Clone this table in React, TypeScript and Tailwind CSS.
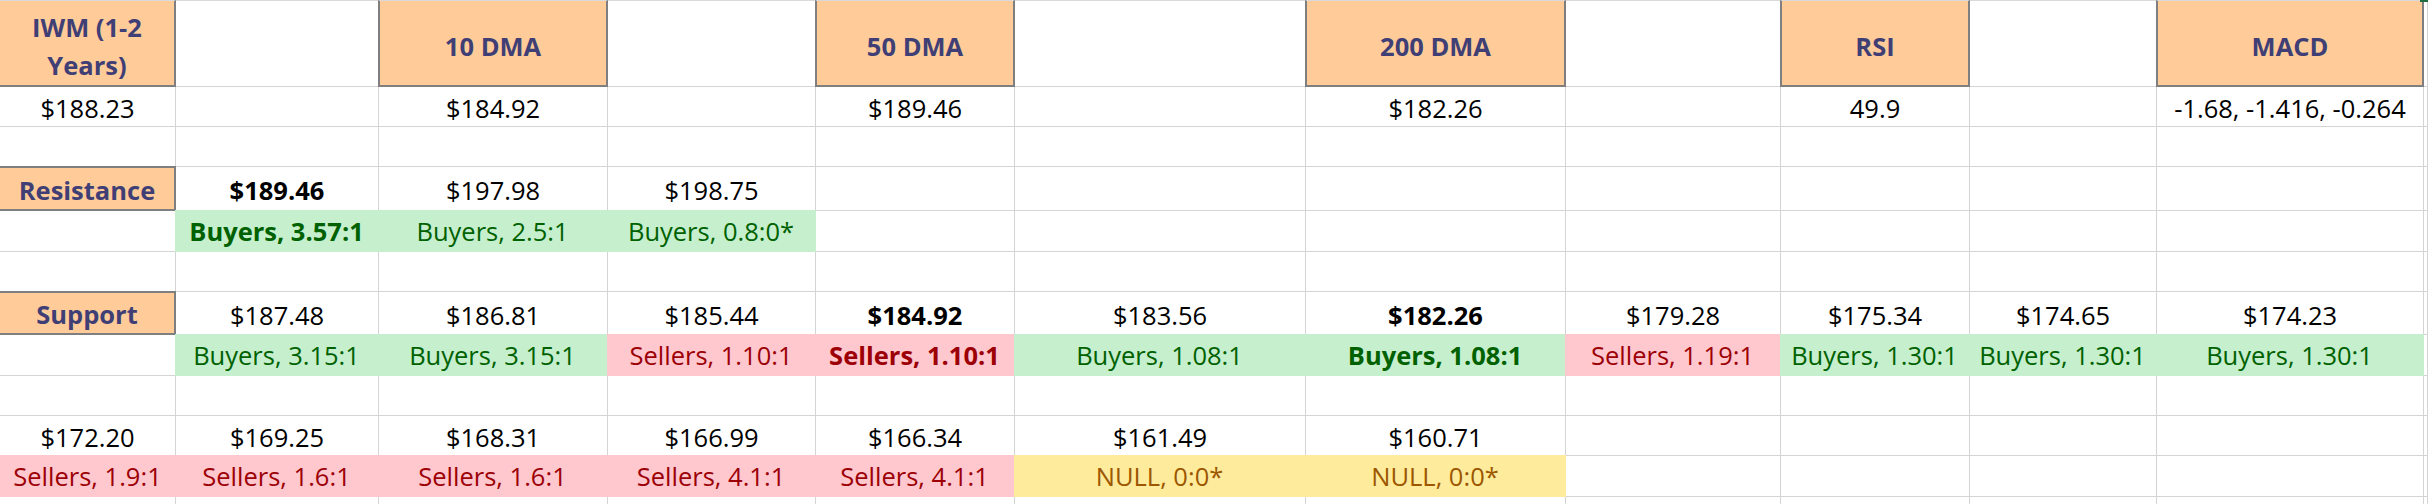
import React from "react";

type Kind =
  | "empty"
  | "plain"
  | "bold"
  | "head"
  | "headSide"
  | "green"
  | "greenB"
  | "red"
  | "redB"
  | "yellow";

type C = [Kind, string?];

const FONT = { fontFamily: '"Open Sans", "Liberation Sans", sans-serif' };

const E: C = ["empty"];

const rows: C[][] = [
  [
    ["head", "IWM (1-2|Years)"],
    E,
    ["head", "10 DMA"],
    E,
    ["head", "50 DMA"],
    E,
    ["head", "200 DMA"],
    E,
    ["head", "RSI"],
    E,
    ["head", "MACD"],
    E,
  ],
  [
    ["plain", "$188.23"],
    E,
    ["plain", "$184.92"],
    E,
    ["plain", "$189.46"],
    E,
    ["plain", "$182.26"],
    E,
    ["plain", "49.9"],
    E,
    ["plain", "-1.68, -1.416, -0.264"],
    E,
  ],
  [E, E, E, E, E, E, E, E, E, E, E, E],
  [
    ["headSide", "Resistance"],
    ["bold", "$189.46"],
    ["plain", "$197.98"],
    ["plain", "$198.75"],
    E, E, E, E, E, E, E, E,
  ],
  [
    E,
    ["greenB", "Buyers, 3.57:1"],
    ["green", "Buyers, 2.5:1"],
    ["green", "Buyers, 0.8:0*"],
    E, E, E, E, E, E, E, E,
  ],
  [E, E, E, E, E, E, E, E, E, E, E, E],
  [
    ["headSide", "Support"],
    ["plain", "$187.48"],
    ["plain", "$186.81"],
    ["plain", "$185.44"],
    ["bold", "$184.92"],
    ["plain", "$183.56"],
    ["bold", "$182.26"],
    ["plain", "$179.28"],
    ["plain", "$175.34"],
    ["plain", "$174.65"],
    ["plain", "$174.23"],
    E,
  ],
  [
    E,
    ["green", "Buyers, 3.15:1"],
    ["green", "Buyers, 3.15:1"],
    ["red", "Sellers, 1.10:1"],
    ["redB", "Sellers, 1.10:1"],
    ["green", "Buyers, 1.08:1"],
    ["greenB", "Buyers, 1.08:1"],
    ["red", "Sellers, 1.19:1"],
    ["green", "Buyers, 1.30:1"],
    ["green", "Buyers, 1.30:1"],
    ["green", "Buyers, 1.30:1"],
    E,
  ],
  [E, E, E, E, E, E, E, E, E, E, E, E],
  [
    ["plain", "$172.20"],
    ["plain", "$169.25"],
    ["plain", "$168.31"],
    ["plain", "$166.99"],
    ["plain", "$166.34"],
    ["plain", "$161.49"],
    ["plain", "$160.71"],
    E, E, E, E, E,
  ],
  [
    ["red", "Sellers, 1.9:1"],
    ["red", "Sellers, 1.6:1"],
    ["red", "Sellers, 1.6:1"],
    ["red", "Sellers, 4.1:1"],
    ["red", "Sellers, 4.1:1"],
    ["yellow", "NULL, 0:0*"],
    ["yellow", "NULL, 0:0*"],
    E, E, E, E, E,
  ],
  [E, E, E, E, E, E, E, E, E, E, E, E],
];

const grid = "border-r border-b border-[#d4d4d4]";
const center =
  "flex items-center justify-center whitespace-nowrap text-[25.5px] leading-[normal]";

function cls(kind: Kind, r: number, c: number): string {
  const top = r === 0 ? " border-t border-t-[#dadada]" : "";
  switch (kind) {
    case "empty":
      return grid + top;
    case "plain":
      return `${grid} ${center} pt-[3px] text-black`;
    case "bold":
      return `${grid} ${center} pt-[3px] text-black font-bold`;
    case "head":
      return (
        `${center} pt-[6px] bg-[#ffcc99] text-[#3f3f76] font-bold border-r-2 border-b-2 border-[#7f7f7f] border-t border-t-[#dadada] text-center` +
        (c === 0 ? "" : " border-l-2 -ml-px")
      );
    case "headSide":
      return `${center} pt-[2px] bg-[#ffcc99] text-[#3f3f76] font-bold border-t-2 border-r-2 border-b-2 border-[#7f7f7f] -mt-px`;
    case "green":
      return `${center} pt-[1px] bg-[#c6efce] text-[#006100] border-r border-b border-[#c6efce] -mt-px` + (c === 0 ? "" : " -ml-px");
    case "greenB":
      return `${center} pt-[1px] bg-[#c6efce] text-[#006100] font-bold border-r border-b border-[#c6efce] -mt-px` + (c === 0 ? "" : " -ml-px");
    case "red":
      return `${center} pt-[1px] bg-[#ffc7ce] text-[#9c0006] border-r border-b border-[#ffc7ce] -mt-px` + (c === 0 ? "" : " -ml-px");
    case "redB":
      return `${center} pt-[1px] bg-[#ffc7ce] text-[#9c0006] font-bold border-r border-b border-[#ffc7ce] -mt-px` + (c === 0 ? "" : " -ml-px");
    case "yellow":
      return `${center} pt-[1px] bg-[#ffeb9c] text-[#9c5700] border-r border-b border-[#ffeb9c] -mt-px` + (c === 0 ? "" : " -ml-px");
  }
}

function Content({ text }: { text?: string }) {
  if (!text) return null;
  if (text.includes("|")) {
    const [a, b] = text.split("|");
    return (
      <span className="block leading-[38px]">
        {a}
        <br />
        {b}
      </span>
    );
  }
  return <span>{text}</span>;
}

export default function App() {
  return (
    <div className="relative w-[2428px] h-[504px] overflow-hidden bg-white" style={FONT}>
      <div className="grid grid-cols-[176px_203px_229px_208px_199px_291px_260px_215px_189px_187px_267px_4px] grid-rows-[87px_40px_40px_44px_41px_40px_43px_41px_40px_40px_41px_8px]">
        {rows.map((row, r) =>
          row.map(([kind, text], c) => (
            <div key={`${r}-${c}`} className={cls(kind, r, c)}>
              <Content text={text} />
            </div>
          ))
        )}
      </div>
      <div className="absolute top-0 right-0 w-[8px] h-[2px] bg-[#1e6e42]" />
    </div>
  );
}
